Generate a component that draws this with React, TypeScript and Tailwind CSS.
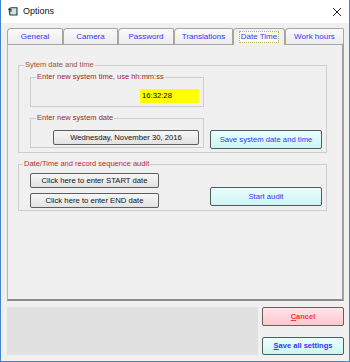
import React from "react";

const tabs = [
  { label: "General", w: "w-[56px]" },
  { label: "Camera", w: "w-[55px]" },
  { label: "Password", w: "w-[56px]" },
  { label: "Translations", w: "w-[59px]" },
  { label: "Date Time", w: "w-[52px]", active: true },
  { label: "Work hours", w: "w-[59px]" },
];

const grayBtn =
  "flex items-center justify-center rounded-[2px] border border-[#5e5e5e] bg-gradient-to-b from-[#f7f7f7] to-[#e2e2e2] text-[7.7px] text-[#111]";
const cyanBtn =
  "flex items-center justify-center rounded-[2px] border border-[#4e5c5c] bg-gradient-to-b from-[#eafefe] to-[#cdf5f5] text-[7.7px] text-[#3434ff]";

function Legend({ text, color, left = "left-[5px]" }: { text: string; color: string; left?: string }) {
  return (
    <span
      className={`absolute top-[-7px] ${left} bg-[#f0f0f0] px-[1px] text-[7.5px] leading-[12px] ${color}`}
    >
      {text}
    </span>
  );
}

export default function App() {
  return (
    <div
      className="flex h-[362px] w-[350px] flex-col border-x border-b border-[#3f86cf] bg-[#f0f0f0]"
      style={{ fontFamily: '"Liberation Sans", Arial, sans-serif' }}
    >
      {/* title bar */}
      <div className="flex h-[23px] items-center bg-white pl-[7px] pr-[6px]">
        <svg width="10" height="10" viewBox="0 0 10 10" className="mt-[1px]">
          <path d="M1 2 L3 0.8 L9 0.8 L9 8 L2 8 Z" fill="#cfe4e4" stroke="#263838" strokeWidth="1.1" />
          <path d="M0.5 2.5 L3 2.5 L3 5" fill="none" stroke="#263838" strokeWidth="1.1" />
        </svg>
        <span className="ml-[5px] text-[9px] text-[#111]">Options</span>
        <svg width="10" height="10" viewBox="0 0 10 10" className="ml-auto mr-[1px]">
          <path d="M1 1 L9 9 M9 1 L1 9" stroke="#222" strokeWidth="1" />
        </svg>
      </div>

      <div className="flex flex-col pl-[6px] pr-[5px] pt-[5px]">
        {/* tabs */}
        <div className="flex h-[16px] items-end">
          {tabs.map((t) =>
            t.active ? (
              <div
                key={t.label}
                className={`${t.w} relative z-10 -mb-[1px] flex h-[17px] items-center justify-center rounded-t-[3px] border-x border-t border-[#a6a6a6] bg-[#f0f0f0]`}
              >
                <span className="border border-dotted border-[#c2ad62] bg-[#fbfbe8] px-[1px] text-[8px] leading-[10px] text-[#3434ff]">
                  {t.label}
                </span>
              </div>
            ) : (
              <div
                key={t.label}
                className={`${t.w} flex h-[16px] items-center justify-center rounded-tl-[4px] rounded-tr-[2px] border-x border-t border-[#a6a6a6] bg-gradient-to-b from-[#fafafa] to-[#ececec] text-[8px] text-[#3434ff]`}
              >
                {t.label}
              </div>
            )
          )}
        </div>

        {/* panel */}
        <div className="flex h-[257px] flex-col border-l border-t border-r-2 border-b-2 border-l-[#b4b4b4] border-t-[#a6a6a6] border-r-[#a0a0a0] border-b-[#8c8c8c] pl-[10px] pt-[20px]">
          {/* group 1 */}
          <div className="relative flex w-[309px] items-end border border-[#cdcdcd] pb-[4px] pl-[11px] pr-[4px] pt-[11px]">
            <Legend text="Sytem date and time" color="text-[#a0522d]" />
            <div className="flex w-[174px] flex-col">
              <div className="relative flex justify-end border border-[#cdcdcd] pb-[3px] pr-[4px] pt-[11px]">
                <Legend text="Enter new system time, use hh:mm:ss" color="text-[#a3262a]" />
                <div className="flex h-[14px] w-[59px] items-center bg-[#ffff00] pl-[2px] text-[7.7px] text-black">
                  16:32:28
                </div>
              </div>
              <div className="relative mt-[11px] flex justify-end border border-[#cdcdcd] pb-[2px] pr-[4px] pt-[11px]">
                <Legend text="Enter new system date" color="text-[#a3262a]" />
                <div className={`${grayBtn} h-[15px] w-[146px]`}>Wednesday, November 30, 2016</div>
              </div>
            </div>
            <div className={`${cyanBtn} -mb-[1px] ml-[6px] h-[19px] w-[112px]`}>Save system date and time</div>
          </div>

          {/* group 2 */}
          <div className="relative mt-[11px] flex w-[309px] items-end border border-[#cdcdcd] pb-[2px] pl-[11px] pr-[4px] pt-[8px]">
            <Legend text="Date/Time and record sequence audit" color="text-[#c0282c]" left="left-[4px]" />
            <div className="flex flex-col gap-[5px]">
              <div className={`${grayBtn} h-[15px] w-[129px]`}>Click here to enter START date</div>
              <div className={`${grayBtn} h-[15px] w-[129px]`}>Click here to enter END date</div>
            </div>
            <div className={`${cyanBtn} mb-[2px] ml-auto h-[19px] w-[112px]`}>Start audit</div>
          </div>
        </div>

        {/* bottom row */}
        <div className="mt-[6px] flex h-[48px] gap-[4px]">
          <div className="w-[251px] bg-[#e1e1e1]" />
          <div className="flex w-[82px] flex-col justify-between">
            <div className="flex h-[19px] items-center justify-center rounded-[2px] border border-[#6e5a5a] bg-gradient-to-b from-[#ffe4e8] to-[#ffc8d0] text-[7.5px] font-bold text-[#ff3030]">
              <span>
                <span className="underline">C</span>ancel
              </span>
            </div>
            <div className="flex h-[18px] items-center justify-center rounded-[2px] border border-[#4e5c5c] bg-gradient-to-b from-[#eafefe] to-[#cdf5f5] text-[7.5px] font-bold text-[#3434ff]">
              <span>
                <span className="underline">S</span>ave all settings
              </span>
            </div>
          </div>
        </div>
      </div>
    </div>
  );
}
